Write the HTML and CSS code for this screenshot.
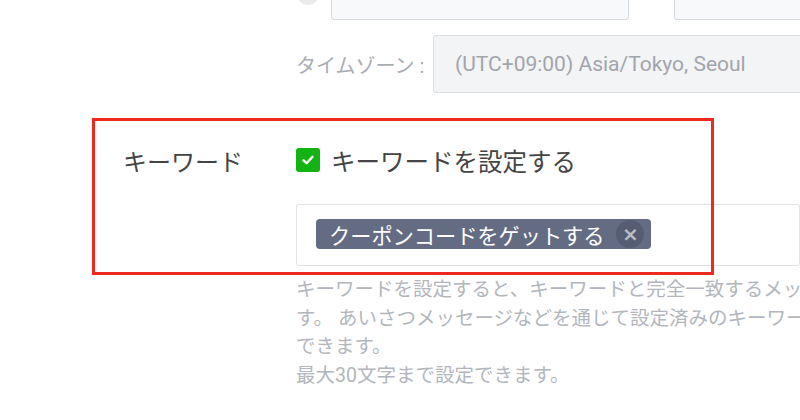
FILE: index.html
```html
<!DOCTYPE html>
<html lang="ja">
<head>
    <meta charset="UTF-8">
    <meta name="viewport" content="width=device-width, initial-scale=1.0">
    <title>キーワード設定</title>
    <link rel="stylesheet" href="styles.css">
</head>
<body>
    <div class="page">
        <div class="row time-row">
            <div class="row-label"></div>
            <div class="controls">
                <span class="radio"></span>
                <div class="time-input first">00:00</div>
                <div class="time-input second">00:00</div>
            </div>
        </div>

        <div class="row tz-row">
            <div class="row-label"></div>
            <div class="controls">
                <span class="tz-label">タイムゾーン :</span>
                <div class="tz-select">(UTC+09:00) Asia/Tokyo, Seoul</div>
            </div>
        </div>

        <div class="row keyword-row">
            <div class="row-label">キーワード</div>
            <div class="controls">
                <label class="check">
                    <span class="check-box">
                        <svg width="14" height="14" viewBox="0 0 14 14"><path d="M2.5 7.3 L5.6 10.2 L11.5 3.8" fill="none" stroke="#fff" stroke-width="2.4" stroke-linecap="round" stroke-linejoin="round"/></svg>
                    </span>
                    キーワードを設定する
                </label>
            </div>
        </div>

        <div class="row tags-row">
            <div class="row-label"></div>
            <div class="tag-input">
                <span class="tag">クーポンコードをゲットする<span class="tag-close">×</span></span>
            </div>
        </div>

        <div class="row help-row">
            <div class="row-label"></div>
            <p class="help">キーワードを設定すると、キーワードと完全一致するメッセージを受信した際に自動で応答しま<br>す。 あいさつメッセージなどを通じて設定済みのキーワードを友だちに案内することが<br>できます。<br>最大30文字まで設定できます。</p>
        </div>

        <div class="highlight"></div>
    </div>
</body>
</html>
```

FILE: styles.css
```css
body {
    margin: 0;
    background: #fff;
    font-family: Roboto, "Noto Sans CJK JP", sans-serif;
    overflow: hidden;
}
.page {
    position: relative;
    width: 800px;
    height: 420px;
    overflow: hidden;
}
.row {
    display: flex;
    align-items: center;
    padding-left: 123px;
}
.row-label {
    width: 173px;
    flex-shrink: 0;
    font-size: 24px;
    color: #444;
}
.controls {
    display: flex;
    align-items: center;
}

/* time row, mostly cut off at the top */
.time-row {
    margin-top: -32px;
    height: 52px;
}
.radio {
    width: 22px;
    height: 22px;
    margin-left: 1px;
    margin-right: 12px;
    border-radius: 50%;
    background: #eaebed;
}
.time-input {
    box-sizing: border-box;
    height: 52px;
    border: 1px solid #d6d9de;
    border-radius: 3px;
    background: #f8f9fa;
    color: #b5b9bf;
    font-size: 20px;
    padding: 12px 20px;
}
.time-input.first {
    width: 298px;
}
.time-input.second {
    width: 200px;
    margin-left: 45px;
}

/* timezone */
.tz-row {
    margin-top: 15px;
}
.tz-label {
    width: 137px;
    font-size: 20px;
    color: #a9adb4;
}
.tz-select {
    box-sizing: border-box;
    width: 400px;
    height: 58px;
    line-height: 56px;
    padding-left: 21px;
    border: 1px solid #dcdfe3;
    border-radius: 3px;
    background: #f3f4f5;
    color: #a1a5ac;
    font-size: 21px;
}

/* keyword */
.keyword-row {
    margin-top: 50px;
    height: 34px;
}
.check {
    display: flex;
    align-items: center;
    font-size: 24.5px;
    color: #444;
}
.check-box {
    display: flex;
    align-items: center;
    justify-content: center;
    width: 24px;
    height: 24px;
    margin-right: 11px;
    border-radius: 3px;
    background: #12b312;
}

.tags-row {
    margin-top: 27px;
}
.tag-input {
    box-sizing: border-box;
    width: 520px;
    height: 62px;
    padding: 14px 19px;
    border: 1px solid #dfe2e6;
    border-radius: 3px;
    background: #fff;
}
.tag {
    display: inline-flex;
    align-items: center;
    height: 30px;
    padding: 0 7px 0 13px;
    border-radius: 4px;
    background: #646c83;
    color: #fff;
    font-size: 21.2px;
}
.tag-close {
    display: flex;
    align-items: center;
    justify-content: center;
    width: 28px;
    height: 28px;
    margin-left: 12px;
    border-radius: 50%;
    background: #555d72;
    color: #b9bdc7;
    font-family: "DejaVu Sans", sans-serif;
    font-size: 20px;
    font-weight: bold;
}

.help-row {
    margin-top: 10px;
    align-items: flex-start;
}
.help {
    margin: 0;
    white-space: nowrap;
    font-size: 19.5px;
    line-height: 28.7px;
    color: #b3b7bd;
}

.highlight {
    position: absolute;
    left: 92px;
    top: 118px;
    width: 616px;
    height: 151px;
    border: 3px solid #ee2a1e;
}
```
